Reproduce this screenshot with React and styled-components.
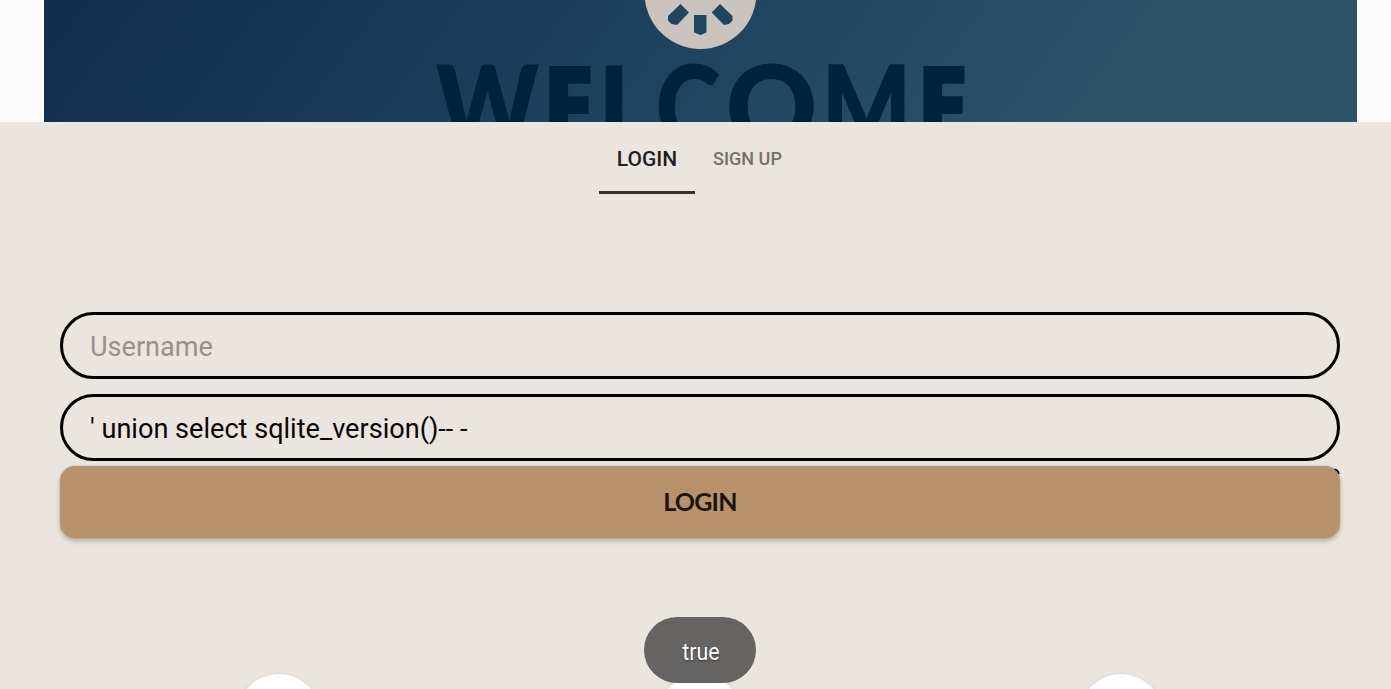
import React from "react";
import styled, { createGlobalStyle } from "styled-components";

const GlobalStyle = createGlobalStyle`
  * { box-sizing: border-box; }
  body { margin: 0; background: #eae5df; overflow: hidden; }
`;

const Page = styled.div`
  width: 100%;
  height: 689px;
  overflow: hidden;
  background: #eae5df;
  font-family: Roboto, sans-serif;
  display: flex;
  flex-direction: column;
  position: relative;
`;

const Header = styled.header`
  flex: none;
  height: 122px;
  padding: 0 34px 0 44px;
  background: #fbfbfb;
`;

const Banner = styled.div`
  height: 100%;
  background: linear-gradient(127deg, #112d4d 0%, #20445f 50%, #2b5469 82%);
`;

const BannerArt = styled.svg`
  display: block;
  width: 1313px;
  height: 122px;
`;

const Wordmark = styled.text`
  font: 900 115px Lato, sans-serif;
  fill: #00233b;
`;

const Letter = styled.tspan`
  font-family: ${(p) => (p.$square ? '"Open Sans"' : "Lato")}, sans-serif;
  font-weight: ${(p) => (p.$square ? 800 : 900)};
  stroke: #00233b;
  stroke-width: ${(p) => (p.$square ? 0 : 1.2)}px;
`;

const Tabs = styled.nav`
  flex: none;
  display: flex;
  height: 72px;
  margin-left: 599px;
`;

const Tab = styled.button`
  width: 96px;
  padding: 4px 0 0 ${(p) => (p.$active ? 0 : 9)}px;
  border: 0;
  border-bottom: 3px solid ${(p) => (p.$active ? "#363132" : "transparent")};
  background: none;
  font-family: inherit;
  font-weight: 500;
  font-size: ${(p) => (p.$active ? 21 : 18)}px;
  color: ${(p) => (p.$active ? "#211f1d" : "#74716c")};
`;

const Form = styled.form`
  display: flex;
  flex-direction: column;
  margin: 118px 51px 0 60px;
`;

const Field = styled.input`
  height: 67px;
  margin-bottom: ${(p) => p.$gap}px;
  padding: 3px 27px 0;
  border: 3px solid #000;
  border-radius: 33.5px;
  background: transparent;
  outline: 0;
  font-family: inherit;
  font-size: 27.1px;
  color: #080706;
  &::placeholder { color: #96928b; opacity: 1; }
`;

const ButtonWrap = styled.div`
  position: relative;
  display: flex;
`;

const EyeCorner = styled.svg`
  position: absolute;
  right: 0;
  top: 2px;
  width: 8px;
  height: 10px;
`;

const Submit = styled.button`
  position: relative;
  flex: 1;
  height: 72px;
  padding: 0 0 2px;
  border: 0;
  border-radius: 15px;
  background: #b8926a;
  box-shadow: 0 3px 4px rgba(60, 50, 40, 0.3), 0 0 2px rgba(60, 50, 40, 0.2);
  font: 700 25px Lato, sans-serif;
  letter-spacing: -0.8px;
  color: #1c150d;
`;

const Providers = styled.div`
  flex: none;
  display: flex;
  justify-content: space-between;
  margin: 136px 228px 0 237px;
`;

const ProviderButton = styled.div`
  width: 84px;
  height: 84px;
  border-radius: 50%;
  background: #fff;
  box-shadow: 0 1px 4px rgba(60, 50, 40, 0.15);
`;

const Toast = styled.div`
  position: absolute;
  left: 644px;
  top: 617px;
  width: 112px;
  height: 66px;
  border-radius: 33px;
  display: flex;
  align-items: center;
  justify-content: center;
  padding: 4px 0 0 1px;
  background: #656463;
`;

const ToastText = styled.span`
  color: #fff;
  font-size: 24px;
  transform: scaleX(0.89);
  text-shadow: 0 1px 2px rgba(0, 0, 0, 0.5);
`;

const letters = [
  { ch: "W", x: 436.5, w: 102 },
  { ch: "E", x: 542, w: 53, square: true },
  { ch: "L", x: 599, w: 50, square: true },
  { ch: "C", x: 656, w: 64 },
  { ch: "O", x: 726, w: 91 },
  { ch: "M", x: 822, w: 89 },
  { ch: "E", x: 916, w: 53, square: true },
];

export default function App() {
  return (
    <Page>
      <GlobalStyle />
      <Header>
        <Banner>
          <BannerArt viewBox="44 0 1313 122">
            <circle cx="700.5" cy="-7" r="56" fill="#cbc4be" />
            <g fill="#20465f">
              <path d="M680.5 4 689 12.5 677 25 671.5 24 668 20.5V16Z" />
              <path d="M694 15h12.5v17.5l-6 2.5-6.5-2.5Z" />
              <path d="M720 4 711.7 12.6 724 25 729 24 732.5 20.5V16Z" />
            </g>
            <Wordmark y="148">
              {letters.map(({ ch, x, w, square }) => (
                <Letter key={x} x={x} textLength={w} lengthAdjust="spacingAndGlyphs" $square={square}>
                  {ch}
                </Letter>
              ))}
            </Wordmark>
          </BannerArt>
        </Banner>
      </Header>
      <Tabs>
        <Tab $active>LOGIN</Tab>
        <Tab>SIGN UP</Tab>
      </Tabs>
      <Form onSubmit={(e) => e.preventDefault()}>
        <Field $gap={15} placeholder="Username" />
        <Field $gap={5} defaultValue="' union select sqlite_version()-- -" />
        <ButtonWrap>
          <EyeCorner viewBox="0 0 8 10">
            <path d="M1 2q5.5-.5 5.5 4" fill="none" stroke="#000" strokeWidth="2.2" />
          </EyeCorner>
          <Submit>LOGIN</Submit>
        </ButtonWrap>
      </Form>
      <Providers>
        <ProviderButton />
        <ProviderButton />
        <ProviderButton />
      </Providers>
      <Toast><ToastText>true</ToastText></Toast>
    </Page>
  );
}
